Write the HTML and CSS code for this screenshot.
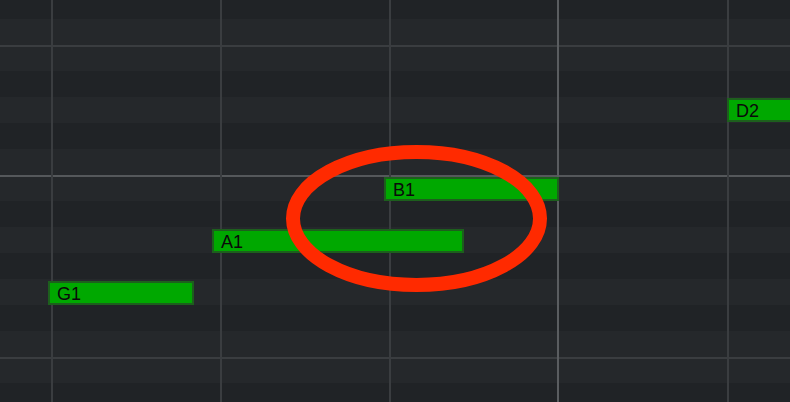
FILE: index.html
```html
<!DOCTYPE html>
<html lang="en">
  <head>
    <meta charset="UTF-8" />
    <meta name="viewport" content="width=device-width, initial-scale=1.0" />
    <title>Piano Roll</title>
    <link rel="stylesheet" href="styles.css">
  </head>
  <body>
    <div class="roll">
      <div class="keys">
        <div class="row black"></div>
        <div class="row white"></div>
        <div class="row white split"></div>
        <div class="row black"></div>
        <div class="row white"></div>
        <div class="row black"></div>
        <div class="row white"></div>
        <div class="row white octave"></div>
        <div class="row black"></div>
        <div class="row white"></div>
        <div class="row black"></div>
        <div class="row white"></div>
        <div class="row black"></div>
        <div class="row white"></div>
        <div class="row white split"></div>
        <div class="row black"></div>
      </div>

      <div class="beat" style="left: 51px"></div>
      <div class="beat" style="left: 220px"></div>
      <div class="beat" style="left: 389px"></div>
      <div class="beat bar" style="left: 557px"></div>
      <div class="beat" style="left: 727px"></div>

      <div class="note" style="left: 48px; top: 281px; width: 146px">G1</div>
      <div class="note" style="left: 212px; top: 229px; width: 252px">A1</div>
      <div class="note" style="left: 384px; top: 177px; width: 175px">B1</div>
      <div class="note" style="left: 727px; top: 98px; width: 90px">D2</div>

      <svg class="mark" width="790" height="402" viewBox="0 0 790 402">
        <ellipse cx="416.5" cy="218.5" rx="123.5" ry="66.5" fill="none" stroke="#ff2a00" stroke-width="14" />
      </svg>
    </div>
  </body>
</html>
```

FILE: styles.css
```css
body {
  margin: 0;
  padding: 0;
  background-color: #202326;
  overflow: hidden;
}
.roll {
  position: relative;
  width: 790px;
  height: 402px;
  overflow: hidden;
}
.keys {
  display: flex;
  flex-direction: column;
  margin-top: -7px;
}
.row {
  height: 26px;
  box-sizing: border-box;
}
.row.white {
  background-color: #25282b;
}
.row.black {
  background-color: #202326;
}
.row.split {
  border-top: 2px solid #3a3d40;
}
.row.octave {
  border-top: 2px solid #55585b;
}
.beat {
  position: absolute;
  top: 0;
  bottom: 0;
  width: 2px;
  background-color: #3a3d40;
}
.beat.bar {
  background-color: #5a5d60;
}
.note {
  position: absolute;
  height: 24px;
  box-sizing: border-box;
  padding-left: 7px;
  background-color: #00a800;
  border: 2px solid #1d5f1d;
  color: #0a0a0a;
  font-family: "Liberation Sans", Arial, sans-serif;
  font-size: 18px;
  line-height: 22px;
}
.mark {
  position: absolute;
  top: 0;
  left: 0;
}
```
